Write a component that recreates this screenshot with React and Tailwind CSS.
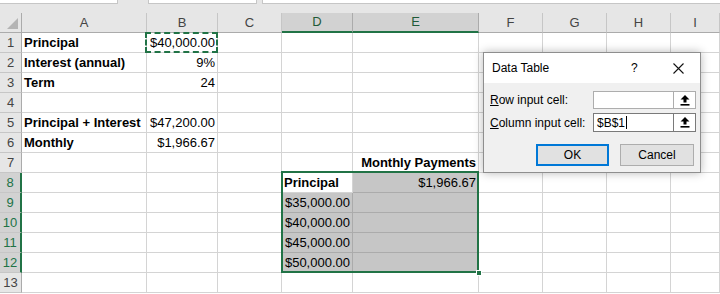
import React from "react";

const COLS = ["A", "B", "C", "D", "E", "F", "G", "H", "I"];

const DATA = {
  1: { A: { t: "Principal", b: true }, B: { t: "$40,000.00", r: true } },
  2: { A: { t: "Interest (annual)", b: true }, B: { t: "9%", r: true } },
  3: { A: { t: "Term", b: true }, B: { t: "24", r: true } },
  5: { A: { t: "Principal + Interest", b: true }, B: { t: "$47,200.00", r: true } },
  6: { A: { t: "Monthly", b: true }, B: { t: "$1,966.67", r: true } },
  7: { E: { t: "Monthly Payments", b: true, r: true } },
  8: { D: { t: "Principal", b: true }, E: { t: "$1,966.67", r: true } },
  9: { D: { t: "$35,000.00", r: true } },
  10: { D: { t: "$40,000.00", r: true } },
  11: { D: { t: "$45,000.00", r: true } },
  12: { D: { t: "$50,000.00", r: true } },
};

function isSel(row, col) {
  return row >= 8 && row <= 12 && (col === "D" || col === "E");
}

function UpArrow() {
  return (
    <svg width="10" height="11" viewBox="0 0 10 11">
      <path d="M5 0 L9.5 4.5 L6.5 4.5 L6.5 7.5 L3.5 7.5 L3.5 4.5 L0.5 4.5 Z" fill="#000" />
      <rect x="0.5" y="9" width="9" height="1.6" fill="#000" />
    </svg>
  );
}

function Dialog() {
  return (
    <div className="absolute left-[483px] top-[52px] w-[218px] h-[121px] border border-[#8e8e8e] bg-[#f0f0f0] shadow-[0_0_9px_rgba(0,0,0,0.28)] flex flex-col text-[12px] text-black">
      <div className="h-[30px] bg-white flex items-center pl-[8px] relative">
        <span className="leading-[14px]">Data Table</span>
        <span className="absolute left-[147px] top-[8px] text-[12px] leading-[14px]">?</span>
        <svg className="absolute left-[189px] top-[10px]" width="11" height="11" viewBox="0 0 11 11">
          <path d="M0.5 0.5 L10.5 10.5 M10.5 0.5 L0.5 10.5" stroke="#111" strokeWidth="1.1" />
        </svg>
      </div>
      <div className="flex flex-col pl-[6px] pt-[8px]">
        <div className="flex items-center h-[18px]">
          <span className="w-[103px] leading-[14px]">
            <span className="underline">R</span>ow input cell:
          </span>
          <div className="flex h-[18px]">
            <div className="w-[81px] h-[18px] bg-white border border-[#adadad]"></div>
            <div className="w-[22px] h-[18px] bg-white border border-l-0 border-[#adadad] flex items-center justify-center">
              <UpArrow />
            </div>
          </div>
        </div>
        <div className="flex items-center h-[19px] mt-[4px]">
          <span className="w-[103px] leading-[14px]">
            <span className="underline">C</span>olumn input cell:
          </span>
          <div className="flex h-[19px]">
            <div className="w-[81px] h-[19px] bg-white border border-[#7a7a7a] flex items-center pl-[3px] leading-[14px]">
              <span>$B$1</span>
              <span className="inline-block w-px h-[13px] bg-black ml-px"></span>
            </div>
            <div className="w-[22px] h-[19px] bg-white border border-l-0 border-[#7a7a7a] flex items-center justify-center">
              <UpArrow />
            </div>
          </div>
        </div>
        <div className="flex mt-[12px]">
          <div className="ml-[46px] w-[73px] h-[22px] bg-[#e1e1e1] border-2 border-[#0078d7] flex items-center justify-center leading-[14px]">
            OK
          </div>
          <div className="ml-[11px] w-[74px] h-[22px] bg-[#e1e1e1] border border-[#adadad] flex items-center justify-center leading-[14px]">
            Cancel
          </div>
        </div>
      </div>
    </div>
  );
}

export default function App() {
  const rows = Array.from({ length: 13 }, (_, i) => i + 1);
  return (
    <div className="relative w-[720px] h-[294px] overflow-hidden bg-white font-['Liberation_Sans',Arial,sans-serif] text-[13px]">
      {/* top strip */}
      <div className="h-[13px] bg-[#e6e6e6] flex items-start">
        <div className="w-[118px] h-[4px] bg-white border-b border-r border-[#c6c6c6]"></div>
        <div className="w-[30px]"></div>
        <div className="w-[109px] h-[4px] bg-white border-b border-x border-[#c6c6c6]"></div>
        <div className="w-[5px]"></div>
        <div className="flex-1 h-[4px] bg-white border-b border-l border-[#c6c6c6]"></div>
      </div>

      <div className="relative grid grid-cols-[22px_125px_71px_64px_71px_126px_64px_64px_64px_1fr] grid-rows-[20px_repeat(13,20px)]">
        {/* header row */}
        <div className="bg-[#e6e6e6] border-r border-b border-[#ababab] relative">
          <svg className="absolute right-[3px] bottom-[3px]" width="11" height="11" viewBox="0 0 11 11">
            <polygon points="11,0 11,11 0,11" fill="#b4b4b4" />
          </svg>
        </div>
        {COLS.map((c) => {
          const sel = c === "D" || c === "E";
          return (
            <div
              key={c}
              className={
                sel
                  ? "bg-[#d2d2d2] border-r border-r-[#ababab] border-b-2 border-b-[#217346] text-[#1f5b39] flex items-center justify-center leading-[18px]"
                  : "bg-[#e6e6e6] border-r border-r-[#c6c6c6] border-b border-b-[#ababab] text-[#444] flex items-center justify-center leading-[18px]"
              }
            >
              {c}
            </div>
          );
        })}

        {rows.map((r) => {
          const selRow = r >= 8 && r <= 12;
          return (
            <React.Fragment key={r}>
              <div
                className={
                  selRow
                    ? "bg-[#d2d2d2] border-r-2 border-r-[#217346] border-b border-b-[#c6c6c6] text-[#217346] flex items-center justify-center leading-[19px]"
                    : "bg-[#e6e6e6] border-r border-r-[#ababab] border-b border-b-[#c6c6c6] text-[#444] flex items-center justify-center leading-[19px]"
                }
              >
                {r}
              </div>
              {COLS.map((c) => {
                const cell = (DATA[r] || {})[c];
                const sel = isSel(r, c) && !(r === 8 && c === "D");
                const base = sel
                  ? "bg-[#c6c6c6] border-r border-b border-[#ababab]"
                  : "bg-white border-r border-b border-[#d4d4d4]";
                const isB1 = r === 1 && c === "B";
                return (
                  <div
                    key={c}
                    className={
                      base +
                      " relative px-[2px] leading-[19px] whitespace-nowrap text-black " +
                      (cell && cell.r ? "flex justify-end" : "flex justify-start") +
                      (cell && cell.b ? " font-bold" : "") +
                      (c === "E" && r === 7 ? " overflow-visible" : "")
                    }
                  >
                    {cell ? <span>{cell.t}</span> : null}
                    {isB1 ? (
                      <div className="absolute left-[-2px] top-[-1px] right-[-1px] bottom-[-1px] border-2 border-dashed border-[#217346]"></div>
                    ) : null}
                  </div>
                );
              })}
            </React.Fragment>
          );
        })}

        {/* selection border */}
        <div className="absolute left-[281px] top-[158px] w-[198px] h-[102px] border-2 border-[#217346] pointer-events-none"></div>
        <div className="absolute left-[476px] top-[257px] w-[6px] h-[6px] bg-[#217346] border border-white"></div>
      </div>

      <Dialog />
    </div>
  );
}
